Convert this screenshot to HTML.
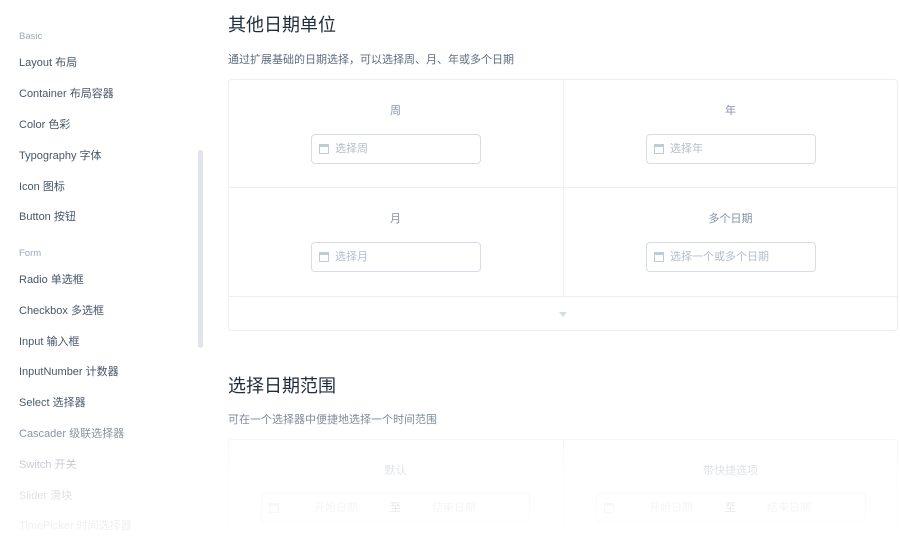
<!DOCTYPE html>
<html><head><meta charset="utf-8"><style>
*{margin:0;padding:0;box-sizing:border-box}
html,body{width:900px;height:546px;overflow:hidden}
body{background:#fff;font-family:"Liberation Sans","Noto Sans CJK SC",sans-serif;position:relative;color:#48576a}
.nav{position:absolute;left:19px;font-size:11px;color:#48576a;line-height:14px}
.grp{position:absolute;left:19px;font-size:9.5px;color:#99a9bf;line-height:12px}
.sb{position:absolute;left:198px;top:150px;width:5px;height:198px;background:#e1e4ea;border-radius:3px}
h2{position:absolute;left:228px;font-size:18px;font-weight:normal;color:#1f2d3d;line-height:22px}
.desc{position:absolute;left:228px;font-size:11px;color:#5e6d82;line-height:14px}
.card{position:absolute;left:228px;width:670px;border:1px solid #eaeefb;border-radius:4px}
.lab{position:absolute;font-size:11px;color:#8492a6;text-align:center;width:335px;line-height:14px}
.inp{position:absolute;height:30px;border:1px solid #d8dce5;border-radius:4px;font-size:11px;color:#b4bccc;line-height:28px;padding-left:23px}
.inp svg{position:absolute;left:7px;top:8px}
.fade{position:absolute;left:0;top:0;width:900px;height:546px;background:linear-gradient(to bottom,rgba(255,255,255,0) 0,rgba(255,255,255,0) 400px,rgba(255,255,255,.75) 470px,rgba(255,255,255,.97) 546px)}
</style></head><body>
<div class="grp" style="top:31px">Basic</div>
<div class="nav" style="top:56px">Layout 布局</div>
<div class="nav" style="top:87px">Container 布局容器</div>
<div class="nav" style="top:118px">Color 色彩</div>
<div class="nav" style="top:149px">Typography 字体</div>
<div class="nav" style="top:180px">Icon 图标</div>
<div class="nav" style="top:210px">Button 按钮</div>
<div class="grp" style="top:248px">Form</div>
<div class="nav" style="top:273px">Radio 单选框</div>
<div class="nav" style="top:304px">Checkbox 多选框</div>
<div class="nav" style="top:335px">Input 输入框</div>
<div class="nav" style="top:365px">InputNumber 计数器</div>
<div class="nav" style="top:396px">Select 选择器</div>
<div class="nav" style="top:427px">Cascader 级联选择器</div>
<div class="nav" style="top:458px">Switch 开关</div>
<div class="nav" style="top:489px">Slider 滑块</div>
<div class="nav" style="top:519px">TimePicker 时间选择器</div>
<div class="sb"></div>

<h2 style="top:14px">其他日期单位</h2>
<div class="desc" style="top:53px">通过扩展基础的日期选择，可以选择周、月、年或多个日期</div>
<div class="card" style="top:79px;height:252px">
 <div style="position:absolute;left:334px;top:0;width:1px;height:217px;background:#eaeefb"></div>
 <div style="position:absolute;left:0;top:107px;width:668px;height:1px;background:#eaeefb"></div>
 <div style="position:absolute;left:0;top:216px;width:668px;height:1px;background:#eaeefb"></div>
 <div style="position:absolute;left:330px;top:232px;width:0;height:0;border-left:4px solid transparent;border-right:4px solid transparent;border-top:5px solid #d3dce6"></div>
</div>
<div class="lab" style="left:228px;top:104px">周</div>
<div class="lab" style="left:563px;top:104px">年</div>
<div class="lab" style="left:228px;top:212px">月</div>
<div class="lab" style="left:563px;top:212px">多个日期</div>
<div class="inp" style="left:311px;top:134px;width:170px"><svg width="10" height="11"><rect x=".5" y="1.5" width="9" height="9" fill="none" stroke="#bfcbd9"/><rect x="0" y="1" width="10" height="3" fill="#bfcbd9"/></svg>选择周</div>
<div class="inp" style="left:646px;top:134px;width:170px"><svg width="10" height="11"><rect x=".5" y="1.5" width="9" height="9" fill="none" stroke="#bfcbd9"/><rect x="0" y="1" width="10" height="3" fill="#bfcbd9"/></svg>选择年</div>
<div class="inp" style="left:311px;top:242px;width:170px"><svg width="10" height="11"><rect x=".5" y="1.5" width="9" height="9" fill="none" stroke="#bfcbd9"/><rect x="0" y="1" width="10" height="3" fill="#bfcbd9"/></svg>选择月</div>
<div class="inp" style="left:646px;top:242px;width:170px"><svg width="10" height="11"><rect x=".5" y="1.5" width="9" height="9" fill="none" stroke="#bfcbd9"/><rect x="0" y="1" width="10" height="3" fill="#bfcbd9"/></svg>选择一个或多个日期</div>

<h2 style="top:375px">选择日期范围</h2>
<div class="desc" style="top:413px">可在一个选择器中便捷地选择一个时间范围</div>
<div class="card" style="top:439px;height:110px">
 <div style="position:absolute;left:334px;top:0;width:1px;height:110px;background:#eaeefb"></div>
</div>
<div class="lab" style="left:228px;top:464px">默认</div>
<div class="lab" style="left:563px;top:464px">带快捷选项</div>
<div class="inp" style="left:261px;top:493px;width:269px;color:#b4bccc"><svg width="10" height="11"><rect x=".5" y="1.5" width="9" height="9" fill="none" stroke="#bfcbd9"/><rect x="0" y="1" width="10" height="3" fill="#bfcbd9"/></svg><span style="position:absolute;left:52px">开始日期</span><span style="position:absolute;left:128px;color:#48576a">至</span><span style="position:absolute;left:170px">结束日期</span></div>
<div class="inp" style="left:596px;top:493px;width:270px;color:#b4bccc"><svg width="10" height="11"><rect x=".5" y="1.5" width="9" height="9" fill="none" stroke="#bfcbd9"/><rect x="0" y="1" width="10" height="3" fill="#bfcbd9"/></svg><span style="position:absolute;left:52px">开始日期</span><span style="position:absolute;left:128px;color:#48576a">至</span><span style="position:absolute;left:170px">结束日期</span></div>
<div class="fade"></div>
</body></html>
